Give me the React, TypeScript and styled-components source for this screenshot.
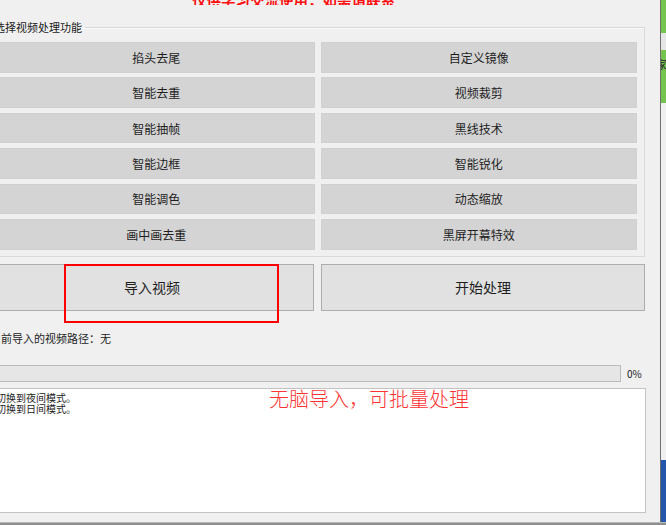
import React from 'react'
import styled, { createGlobalStyle } from 'styled-components'

const GlobalStyle = createGlobalStyle`
  html, body {
    margin: 0;
    padding: 0;
    overflow: hidden;
    background: #f0f0f0;
  }
  body {
    font-family: "Noto Sans CJK SC", "Noto Sans", sans-serif;
    color: #1e1e1e;
  }
  * {
    box-sizing: border-box;
  }
`

const Screen = styled.div`
  width: 666px;
  height: 525px;
  display: flex;
  flex-direction: column;
  overflow: hidden;
`

const Desktop = styled.div`
  flex: 1;
  min-height: 0;
  display: flex;
`

const Window = styled.div`
  position: relative;
  flex: none;
  width: 660px;
  background: #f0f0f0;
  overflow: hidden;
`

const WindowEdge = styled.div`
  flex: none;
  width: 1px;
  background: #6f6f6f;
`

const BackWindow = styled.div`
  flex: 1;
  min-width: 0;
  display: flex;
  flex-direction: column;
  background: #f2f2f2;
  overflow: hidden;
`

const BackBlock = styled.div<{ h: number; bg: string }>`
  height: ${p => p.h}px;
  flex: ${p => (p.h === 0 ? 1 : 'none')};
  background: ${p => p.bg};
  overflow: hidden;
  font-size: 11px;
  line-height: 11px;
  color: #2a2a2a;
  padding-top: 9px;
  margin-left: ${p => (p.h === 53 ? '-5px' : '0')};
  white-space: nowrap;
`

const BottomEdge = styled.div`
  height: 3px;
  background: #8e8e8e;
  border-top: 1px solid #b9b9b9;
`

const Content = styled.div`
  margin-left: -10px;
  width: 656px;
  display: flex;
  flex-direction: column;
`

const Notice = styled.div`
  height: 5px;
  overflow: hidden;
  display: flex;
  align-items: flex-end;
  padding-left: 202px;
  color: #ff1010;
  font-size: 14.5px;
  font-weight: 700;
  line-height: 14px;
  white-space: nowrap;
`

const NoticeText = styled.span`
  display: block;
  margin-bottom: -2px;
`

const Group = styled.fieldset`
  margin: 16px 0 0 0;
  width: 655px;
  padding: 9px 7px 6px 7px;
  border: 1px solid #d9d9d9;
  box-shadow: inset 1px 1px 0 #fbfbfb;
  min-inline-size: 0;
`

const GroupTitle = styled.legend`
  padding: 0 3px 0 1px;
  margin-left: -5px;
  font-size: 11px;
  line-height: 12px;
  color: #1a1a1a;
`

const FuncGrid = styled.div`
  display: grid;
  grid-template-columns: 1fr 1fr;
  grid-auto-rows: 30.6px;
  column-gap: 6px;
  row-gap: 4.8px;
`

const FuncButton = styled.button`
  display: flex;
  align-items: center;
  justify-content: center;
  padding: 0;
  border: 1px solid #d0d0d0;
  background: #d4d4d4;
  font-family: inherit;
  font-size: 12px;
  color: #1e1e1e;
`

const ActionRow = styled.div`
  margin-top: 7px;
  width: 655px;
  display: grid;
  grid-template-columns: 1fr 1fr;
  column-gap: 7px;
`

const ActionButton = styled.button`
  height: 47px;
  padding: 0;
  border: 1px solid #adadad;
  background: #e1e1e1;
  font-family: inherit;
  font-size: 14px;
  color: #1e1e1e;
`

const PathLabel = styled.div`
  margin-top: 21px;
  font-size: 11px;
  line-height: 12px;
  color: #222;
  white-space: nowrap;
`

const ProgressRow = styled.div`
  margin-top: 21px;
  display: flex;
  align-items: center;
  gap: 6px;
`

const ProgressTrack = styled.div`
  width: 631px;
  height: 17px;
  border: 1px solid #bcbcbc;
  background: #e6e6e6;
`

const ProgressValue = styled.span`
  font-size: 10px;
  color: #222;
`

const LogBox = styled.div`
  margin-top: 6px;
  height: 125px;
  background: #ffffff;
  border: 1px solid #c3c3c3;
  padding: 3px 5px;
  font-size: 10px;
  line-height: 11px;
  color: #222;
`

const LogLine = styled.div`
  height: 11px;
  white-space: nowrap;
`

const RedFrame = styled.div`
  position: absolute;
  left: 64px;
  top: 264px;
  width: 215px;
  height: 59px;
  border: 2px solid #ff0000;
  pointer-events: none;
`

const RedNote = styled.div`
  position: absolute;
  left: 269px;
  top: 386px;
  font-size: 20px;
  line-height: 26px;
  color: #ff3333;
  font-weight: 300;
  white-space: nowrap;
`

const functions = [
  '掐头去尾',
  '自定义镜像',
  '智能去重',
  '视频裁剪',
  '智能抽帧',
  '黑线技术',
  '智能边框',
  '智能锐化',
  '智能调色',
  '动态缩放',
  '画中画去重',
  '黑屏开幕特效',
]

const backBlocks = [
  { h: 33, bg: '#74c44f', text: '' },
  { h: 17, bg: '#e6e6e6', text: '' },
  { h: 53, bg: '#74c44f', text: '家' },
  { h: 0, bg: '#f0f0f0', text: '' },
  { h: 62, bg: '#2457ab', text: '' },
]

export default function App() {
  return (
    <Screen>
      <GlobalStyle />
      <Desktop>
        <Window>
          <Content>
            <Notice>
              <NoticeText>仅供学习交流使用，如需请联系</NoticeText>
            </Notice>
            <Group>
              <GroupTitle>选择视频处理功能</GroupTitle>
              <FuncGrid>
                {functions.map(name => (
                  <FuncButton key={name}>{name}</FuncButton>
                ))}
              </FuncGrid>
            </Group>
            <ActionRow>
              <ActionButton>导入视频</ActionButton>
              <ActionButton>开始处理</ActionButton>
            </ActionRow>
            <PathLabel>当前导入的视频路径：无</PathLabel>
            <ProgressRow>
              <ProgressTrack />
              <ProgressValue>0%</ProgressValue>
            </ProgressRow>
            <LogBox>
              <LogLine>切换到夜间模式。</LogLine>
              <LogLine>切换到日间模式。</LogLine>
            </LogBox>
          </Content>
          <RedFrame />
          <RedNote>无脑导入，可批量处理</RedNote>
        </Window>
        <WindowEdge />
        <BackWindow>
          {backBlocks.map((b, i) => (
            <BackBlock key={i} h={b.h} bg={b.bg}>
              {b.text}
            </BackBlock>
          ))}
        </BackWindow>
      </Desktop>
      <BottomEdge />
    </Screen>
  )
}
